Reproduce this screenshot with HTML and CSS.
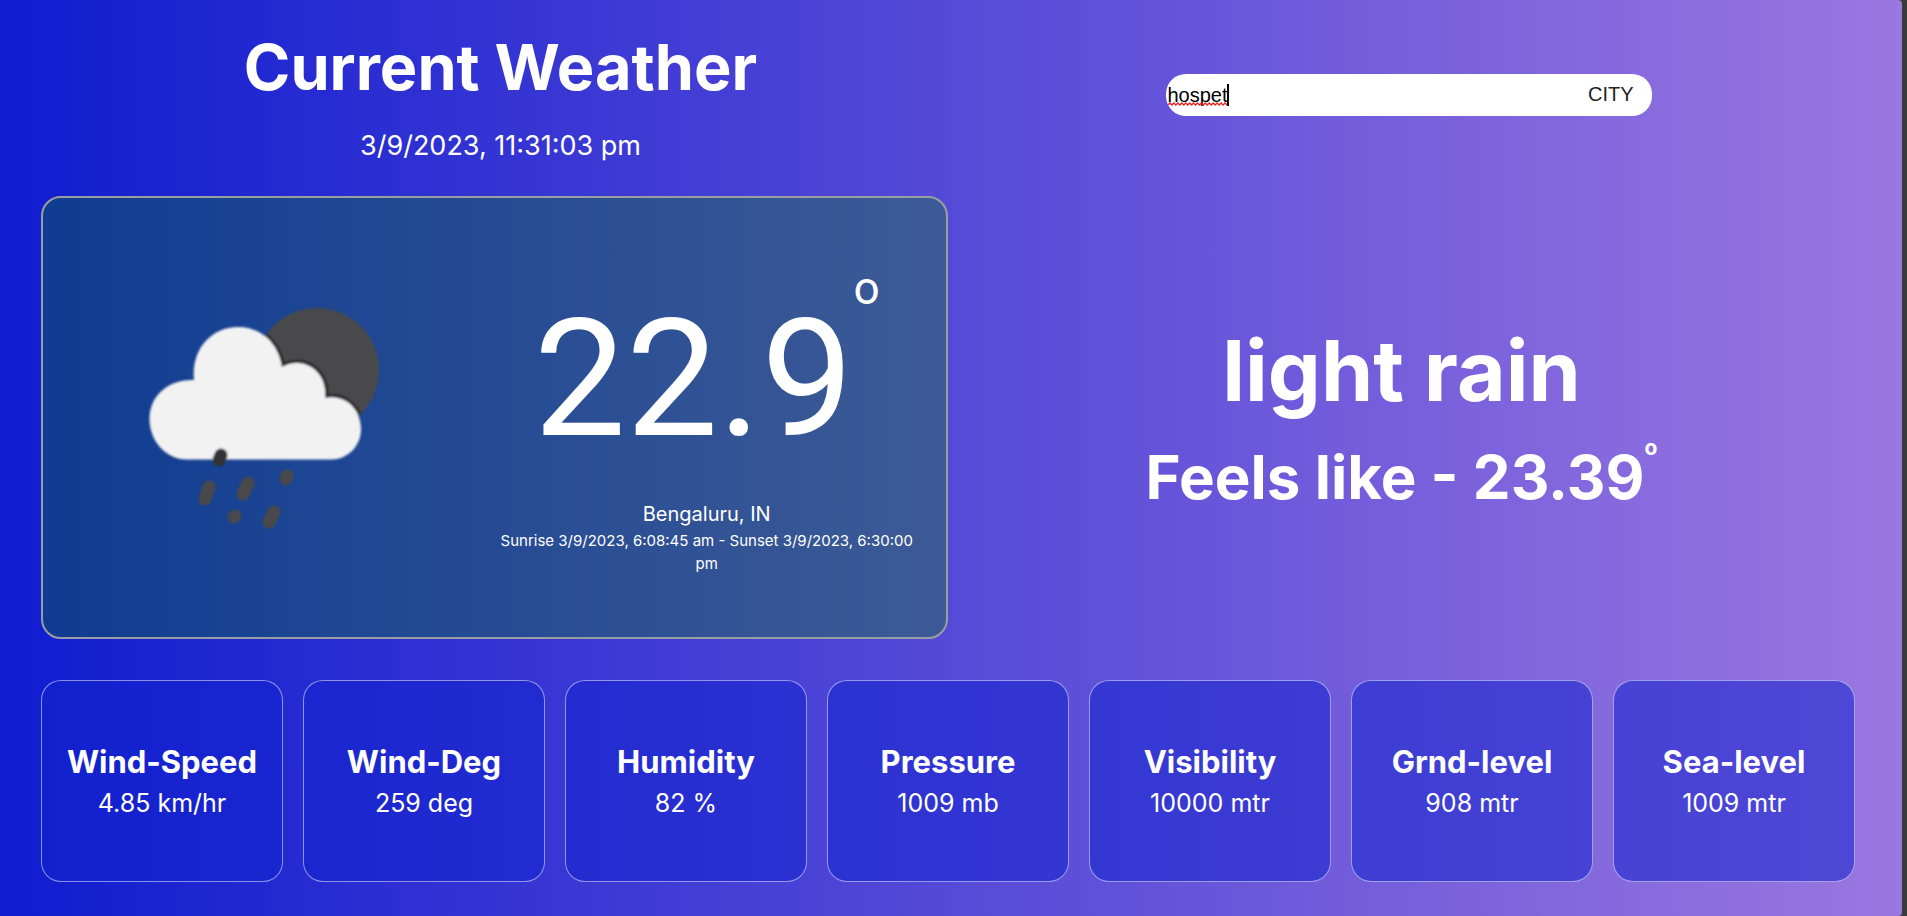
FILE: index.html
```html
<!DOCTYPE html>
<html lang="en">
<head>
<meta charset="utf-8">
<title>Current Weather</title>
<link rel="stylesheet" href="styles.css">
</head>
<body>
<main class="app">
  <header class="heading">
    <h1 class="title">Current Weather</h1>
    <time class="clock">3/9/2023, 11:31:03 pm</time>
  </header>
  <form class="search">
    <input class="search-input" type="text" aria-label="City name" value="hospet">
    <button class="search-button" type="button">CITY</button>
    <div class="typed" aria-hidden="true">
      <svg class="squiggle" width="60" height="4" viewBox="0 0 60 4"><path d="M0 3l2-2 2 2 2-2 2 2 2-2 2 2 2-2 2 2 2-2 2 2 2-2 2 2 2-2 2 2 2-2 2 2 2-2 2 2 2-2 2 2 2-2 2 2 2-2 2 2 2-2 2 2 2-2 2 2 2-2 2 2 2-2 2 2" fill="none" stroke="#f02020" stroke-width="1.300"/></svg>
    </div>
  </form>
  <section class="now">
    <svg class="icon" viewBox="148 307 232 222" role="img" aria-label="Rain at night">
      <defs>
        <clipPath id="moon"><circle cx="317" cy="370" r="62"/></clipPath>
        <filter id="soft" x="-10%" y="-10%" width="120%" height="120%"><feGaussianBlur stdDeviation="0.900"/></filter>
        <path id="cloud" d="M187 459.500C166 459.500 149.500 441 149.500 419C149.500 396 168 379 194 380C191 351 210 327 238 327C260 327 278 342 282 367C303 355 328 371 325 398C345 394 361 409 361 429C361 446 348 459.500 331 459.500Z"/>
      </defs>
      <g filter="url(#soft)">
        <circle cx="317" cy="370" r="62" fill="#4a4a4c"/>
        <g clip-path="url(#moon)"><use href="#cloud" fill="#2b2c2e" stroke="#2b2c2e" stroke-width="7"/></g>
        <use href="#cloud" fill="#f2f2f2"/>
        <g stroke="#4a4a4c" stroke-width="13" stroke-linecap="round">
          <path d="M209 487l-4 12M248 483l-5 11M274 512l-5 10"/>
          <path d="M287 476l-1 3M235 516l-1 1"/>
          <path d="M221 455l-2 5" stroke="#303234"/>
        </g>
      </g>
    </svg>
    <div class="reading">
      <p class="temp">22.9<sup class="temp-degree">o</sup></p>
      <p class="place">Bengaluru, IN</p>
      <p class="sun">Sunrise 3/9/2023, 6:08:45 am - Sunset 3/9/2023, 6:30:00 pm</p>
    </div>
  </section>
  <section class="summary">
    <h2 class="condition">light rain</h2>
    <p class="feels">Feels like - 23.39<sup class="feels-degree">o</sup></p>
  </section>
  <section class="stats">
    <article class="stat"><h3 class="stat-name">Wind-Speed</h3><p class="stat-value">4.85 km/hr</p></article>
    <article class="stat"><h3 class="stat-name">Wind-Deg</h3><p class="stat-value">259 deg</p></article>
    <article class="stat"><h3 class="stat-name">Humidity</h3><p class="stat-value">82 %</p></article>
    <article class="stat"><h3 class="stat-name">Pressure</h3><p class="stat-value">1009 mb</p></article>
    <article class="stat"><h3 class="stat-name">Visibility</h3><p class="stat-value">10000 mtr</p></article>
    <article class="stat"><h3 class="stat-name">Grnd-level</h3><p class="stat-value">908 mtr</p></article>
    <article class="stat"><h3 class="stat-name">Sea-level</h3><p class="stat-value">1009 mtr</p></article>
  </section>
</main>
</body>
</html>
```
FILE: styles.css
```css
* { box-sizing: border-box; }

body {
  margin: 0;
  padding-right: 5px;
  background: #3a3a3a;
  color: #fff;
  font-family: Inter, "Liberation Sans", sans-serif;
}

h1, h2, h3, p { margin: 0; }

.app {
  min-height: 100vh;
  padding: 30px 47px 34px 41px;
  border-radius: 0 4px 4px 0;
  background: linear-gradient(to right, #0f1ccf, #9b77e0);
  display: grid;
  grid-template-columns: 1fr 1fr;
  grid-template-rows: auto 1fr auto;
}

.heading {
  padding-left: 12px;
  height: 166px;
  text-align: center;
}

.title {
  font-size: 63px;
  line-height: 74px;
  font-weight: 700;
}

.clock {
  display: block;
  margin-top: 24px;
  font-size: 27px;
  line-height: 36px;
}

.search {
  position: relative;
  justify-self: center;
  display: flex;
  align-items: center;
  width: 486px;
  height: 42px;
  margin: 44px 0 0 14px;
  border-radius: 20px;
  background: #fff;
  overflow: hidden;
}

.search-input,
.search-button {
  height: 42px;
  border: 0;
  background: transparent;
  color: #000;
  font-family: "Liberation Sans", Arial, sans-serif;
  font-size: 20px;
}

.search-input {
  flex: 1;
  min-width: 0;
  padding: 0 2px;
  outline: 0;
}

.search-button {
  padding: 0 18px 2px;
  color: #222;
}

.typed {
  position: absolute;
  left: 2px;
  top: 10px;
  width: 61px;
  height: 22px;
  border-right: 2px solid #000;
  display: flex;
  align-items: flex-end;
}

.squiggle { display: block; }

.now {
  display: grid;
  grid-template-columns: 1fr 1fr;
  align-items: center;
  padding-right: 18px;
  border: 2px solid #999fa0;
  border-radius: 20px;
  background: rgba(10, 128, 8, 0.31);
}

.icon {
  justify-self: center;
  width: 232px;
  height: 222px;
}

.reading {
  padding: 4px 8px 0;
  text-align: center;
}

.temp {
  font-family: Roboto, sans-serif;
  font-size: 164px;
  line-height: 192px;
}

.temp-degree,
.feels-degree {
  display: inline-block;
  line-height: 1;
}

.temp-degree {
  font-size: 46px;
  vertical-align: 131px;
}

.place {
  margin-top: 24px;
  font-size: 20px;
  line-height: 30px;
}

.sun {
  font-size: 15px;
  line-height: 23px;
}

.summary {
  display: flex;
  flex-direction: column;
  align-items: center;
  justify-content: center;
  padding-top: 14px;
  text-align: center;
}

.condition {
  font-size: 84px;
  line-height: 104px;
  font-weight: 700;
}

.feels {
  font-size: 60px;
  line-height: 108px;
  font-weight: 700;
}

.feels-degree {
  font-size: 21px;
  vertical-align: 44px;
}

.stats {
  grid-column: 1 / -1;
  display: grid;
  grid-template-columns: repeat(7, 1fr);
  gap: 20px;
  margin-top: 41px;
}

.stat {
  display: flex;
  flex-direction: column;
  justify-content: center;
  height: 202px;
  border: 1px solid rgba(255, 255, 255, 0.5);
  border-radius: 20px;
  background: rgba(18, 34, 206, 0.55);
  text-align: center;
}

.stat-name {
  font-size: 31px;
  line-height: 44px;
  font-weight: 700;
}

.stat-value {
  font-size: 25px;
  line-height: 38px;
}
```
